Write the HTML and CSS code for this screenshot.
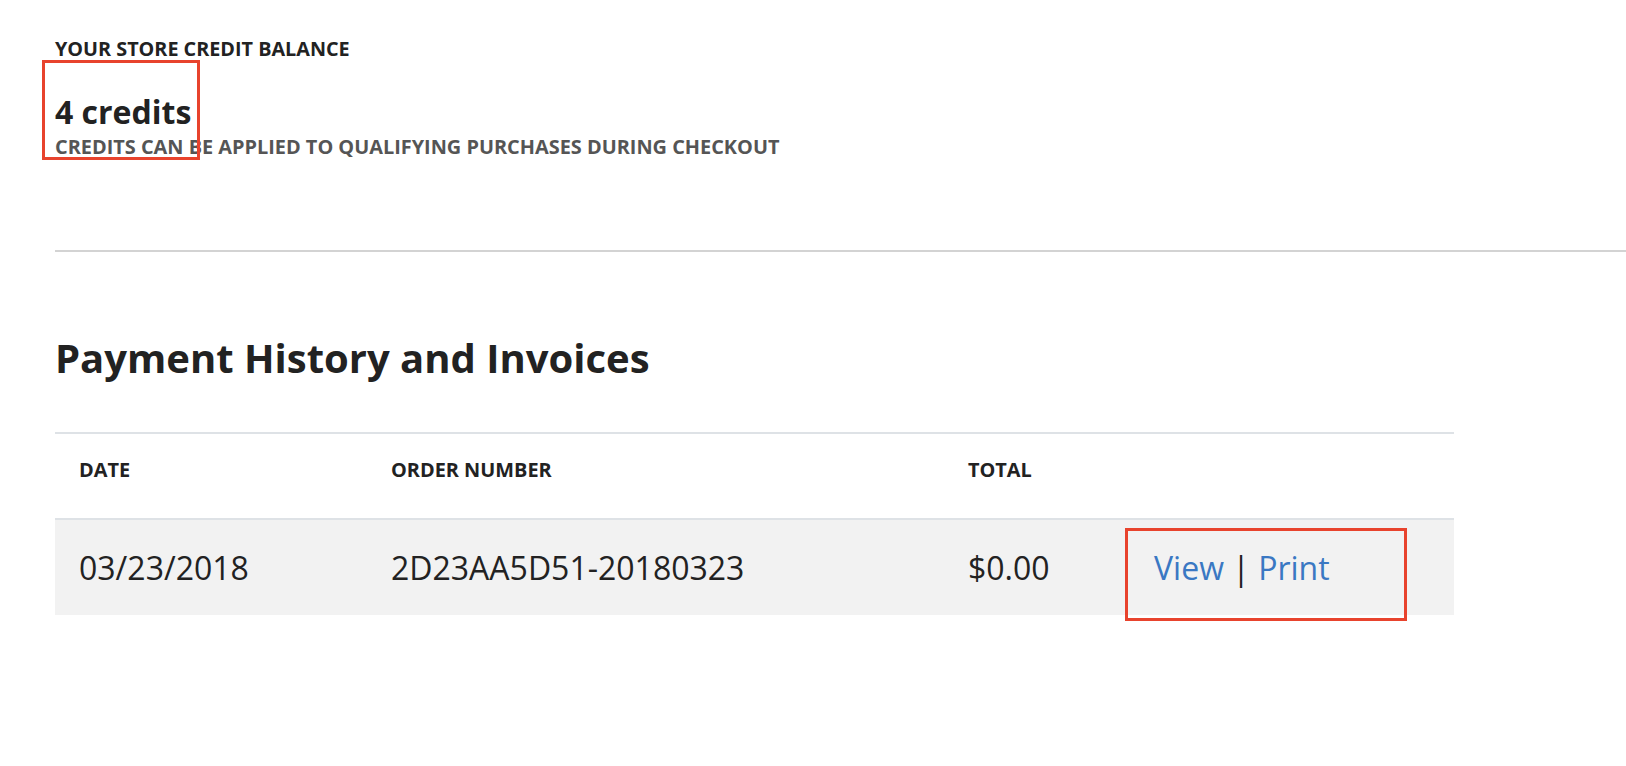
FILE: index.html
```html
<!DOCTYPE html>
<html>
<head>
<meta charset="utf-8">
<link rel="stylesheet" href="styles.css">
</head>
<body>
<div class="page">
  <section class="credit">
    <div class="credit-label">YOUR STORE CREDIT BALANCE</div>
    <div class="credit-amount">4 credits<span class="mark mark-amount"></span></div>
    <div class="credit-note">CREDITS CAN BE APPLIED TO QUALIFYING PURCHASES DURING CHECKOUT</div>
  </section>
  <hr class="divider">
  <section class="history">
    <h2 class="history-title">Payment History and Invoices</h2>
    <table class="orders">
      <colgroup>
        <col class="c-date"><col class="c-order"><col class="c-total"><col class="c-actions">
      </colgroup>
      <thead>
        <tr><th>DATE</th><th>ORDER NUMBER</th><th>TOTAL</th><th></th></tr>
      </thead>
      <tbody>
        <tr>
          <td>03/23/2018</td>
          <td>2D23AA5D51-20180323</td>
          <td>$0.00</td>
          <td class="actions"><a href="#">View</a> <span class="sep">|</span> <a href="#">Print</a><span class="mark mark-actions"></span></td>
        </tr>
      </tbody>
    </table>
  </section>
</div>
</body>
</html>
```

FILE: styles.css
```css
* { box-sizing: border-box; }
html, body { margin: 0; padding: 0; background: #fff; }
body {
  font-family: "Open Sans", "Liberation Sans", sans-serif;
  color: #212529;
  width: 1626px;
  height: 766px;
  overflow: hidden;
}
.page { padding: 36px 0 0 55px; }
.credit-label {
  font-size: 19.8px;
  font-weight: 700;
  line-height: 26px;
  color: #222;
}
.credit-amount {
  position: relative;
  display: inline-block;
  margin-top: 30px;
  font-size: 32px;
  font-weight: 700;
  line-height: 40px;
  color: #222;
}
.credit-note {
  margin-top: 3px;
  font-size: 19.9px;
  font-weight: 700;
  line-height: 24px;
  color: #555;
}
.mark {
  position: absolute;
  border: 3px solid #e8432d;
  pointer-events: none;
}
.mark-amount { left: -13px; top: -32px; width: 158px; height: 100px; }
.divider {
  margin: 91px 0 0 0;
  border: 0;
  border-top: 2px solid #d3d3d3;
  height: 0;
}
.history-title {
  margin: 81px 0 0 0;
  font-size: 40px;
  font-weight: 700;
  line-height: 50px;
  color: #222;
}
.orders {
  margin-top: 49px;
  width: 1399px;
  border-collapse: collapse;
  table-layout: fixed;
}
.c-date { width: 312px; }
.c-order { width: 577px; }
.c-total { width: 186px; }
.c-actions { width: 324px; }
.orders thead tr { border-top: 2px solid #dee2e6; border-bottom: 2px solid #dee2e6; }
.orders th {
  text-align: left;
  padding: 0 0 14px 24px;
  height: 86px;
  font-size: 19.9px;
  font-weight: 700;
  color: #222;
  vertical-align: middle;
}
.orders tbody tr { background: #f2f2f2; }
.orders td {
  padding: 0 0 0 24px;
  height: 96px;
  font-size: 32px;
  font-weight: 400;
  color: #222;
  vertical-align: middle;
}
.actions { position: relative; }
.actions a { color: #3a78c3; text-decoration: none; }
.sep { color: #222; }
.mark-actions { left: -5px; top: 8px; width: 282px; height: 93px; }
```
